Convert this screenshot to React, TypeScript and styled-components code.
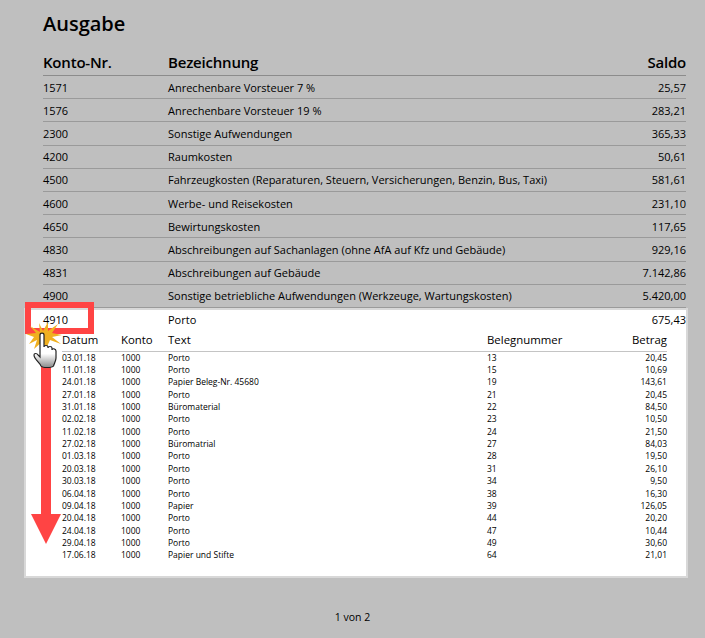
import React from 'react'
import styled, { createGlobalStyle } from 'styled-components'

const GlobalStyle = createGlobalStyle`
  html, body {
    margin: 0;
    padding: 0;
    background: #bfbfbf;
  }
  body {
    font-family: 'Open Sans', 'Noto Sans', sans-serif;
    color: #000;
  }
`

const Page = styled.div`
  position: relative;
  width: 705px;
  height: 638px;
  box-sizing: border-box;
  padding: 11px 19px 0 43px;
  overflow: hidden;
`

const Title = styled.h1`
  margin: 0;
  font-size: 20px;
  line-height: 26px;
  font-weight: 600;
`

const MainGrid = `
  display: grid;
  grid-template-columns: 125px 1fr 100px;
  align-items: center;
`

const HeadRow = styled.div`
  ${MainGrid}
  margin-top: 13px;
  height: 23px;
  padding-bottom: 2px;
  font-size: 15px;
  font-weight: 600;
  letter-spacing: -0.2px;
  border-bottom: 1px solid #8c8c8c;
`

const Row = styled.div`
  ${MainGrid}
  height: 22.2px;
  font-size: 11px;
  border-bottom: 1px solid #9a9a9a;

  &:last-of-type {
    border-bottom: none;
  }
`

const Amount = styled.div`
  text-align: right;
`

const Panel = styled.div`
  margin: 2px 0 0 -17px;
  padding: 0 0 0 17px;
  height: 266px;
  background: #fff;
  box-shadow: 0 0 0 2px #d8d8d8;
`

const PanelRow = styled.div`
  ${MainGrid}
  height: 20px;
  font-size: 11px;
`

const Detail = styled.div`
  margin: 0 19px 0 19px;
`

const DetailGrid = `
  display: grid;
  grid-template-columns: 59px 47px 319px 1fr 60px;
  align-items: center;
`

const DetailHead = styled.div`
  ${DetailGrid}
  height: 19px;
  padding-bottom: 2px;
  margin-bottom: -1px;
  font-size: 11.4px;
  border-bottom: 1px solid #c4c4c4;
`

const DetailRow = styled.div`
  ${DetailGrid}
  height: 12.36px;
  font-size: 8.5px;
`

const Footer = styled.div`
  margin-top: 34px;
  margin-left: -43px;
  margin-right: -19px;
  text-align: center;
  font-size: 10.5px;
  line-height: 14px;
`

const HighlightBox = styled.div`
  position: absolute;
  left: 25px;
  top: 302px;
  width: 69px;
  height: 32px;
  box-sizing: border-box;
  border: 6px solid #ff4444;
`

const Overlay = styled.svg`
  position: absolute;
  left: 20px;
  top: 320px;
`

const accounts = [
  ['1571', 'Anrechenbare Vorsteuer 7 %', '25,57'],
  ['1576', 'Anrechenbare Vorsteuer 19 %', '283,21'],
  ['2300', 'Sonstige Aufwendungen', '365,33'],
  ['4200', 'Raumkosten', '50,61'],
  ['4500', 'Fahrzeugkosten (Reparaturen, Steuern, Versicherungen, Benzin, Bus, Taxi)', '581,61'],
  ['4600', 'Werbe- und Reisekosten', '231,10'],
  ['4650', 'Bewirtungskosten', '117,65'],
  ['4830', 'Abschreibungen auf Sachanlagen (ohne AfA auf Kfz und Gebäude)', '929,16'],
  ['4831', 'Abschreibungen auf Gebäude', '7.142,86'],
  ['4900', 'Sonstige betriebliche Aufwendungen (Werkzeuge, Wartungskosten)', '5.420,00'],
]

const bookings = [
  ['03.01.18', 'Porto', '13', '20,45'],
  ['11.01.18', 'Porto', '15', '10,69'],
  ['24.01.18', 'Papier Beleg-Nr. 45680', '19', '143,61'],
  ['27.01.18', 'Porto', '21', '20,45'],
  ['31.01.18', 'Büromaterial', '22', '84,50'],
  ['02.02.18', 'Porto', '23', '10,50'],
  ['11.02.18', 'Porto', '24', '21,50'],
  ['27.02.18', 'Büromatrial', '27', '84,03'],
  ['01.03.18', 'Porto', '28', '19,50'],
  ['20.03.18', 'Porto', '31', '26,10'],
  ['30.03.18', 'Porto', '34', '9,50'],
  ['06.04.18', 'Porto', '38', '16,30'],
  ['09.04.18', 'Papier', '39', '126,05'],
  ['20.04.18', 'Porto', '44', '20,20'],
  ['24.04.18', 'Porto', '47', '10,44'],
  ['29.04.18', 'Porto', '49', '30,60'],
  ['17.06.18', 'Papier und Stifte', '64', '21,01'],
]

const App = () => {
  return (
    <Page>
      <GlobalStyle />
      <Title>Ausgabe</Title>
      <HeadRow>
        <div>Konto-Nr.</div>
        <div>Bezeichnung</div>
        <Amount>Saldo</Amount>
      </HeadRow>
      {accounts.map(([nr, name, saldo]) => (
        <Row key={nr}>
          <div>{nr}</div>
          <div>{name}</div>
          <Amount>{saldo}</Amount>
        </Row>
      ))}
      <Panel>
        <PanelRow>
          <div>4910</div>
          <div>Porto</div>
          <Amount>675,43</Amount>
        </PanelRow>
        <Detail>
          <DetailHead>
            <div>Datum</div>
            <div>Konto</div>
            <div>Text</div>
            <div>Belegnummer</div>
            <Amount>Betrag</Amount>
          </DetailHead>
          {bookings.map(([date, text, nr, amount]) => (
            <DetailRow key={date}>
              <div>{date}</div>
              <div>1000</div>
              <div>{text}</div>
              <div>{nr}</div>
              <Amount>{amount}</Amount>
            </DetailRow>
          ))}
        </Detail>
      </Panel>
      <Footer>1 von 2</Footer>
      <HighlightBox />
      <Overlay width="60" height="230" viewBox="0 0 60 230">
        <defs>
          <linearGradient id="handShade" x1="0" y1="0" x2="0" y2="1">
            <stop offset="0.6" stopColor="#ffffff" />
            <stop offset="1" stopColor="#8a8a8a" />
          </linearGradient>
        </defs>
        <path d="M21 40H31V194H41L26 224L11 194H21Z" fill="#ff4444" />
        <path
          d="M19 3L23 11L28 2L28 11L38 4L32 13L42 15L32 17L41 24L30 20L26 29L23 21L14 29L17 20L9 24L14 17L6 14L16 13L10 6L20 12Z"
          fill="#f0b020"
        />
        <path
          d="M20 15c0-2.500 4-2.500 4 0v12c0-2 4-2 4 0v1c0-2 4-2 4 0v2c0-2 4-1.500 4 1v7c0 3-1.500 5-2.500 8-1 1.500-3.500 1.500-6.500 1.500-3 0-5 0-6-1.500-1-3-7-7-7-11 0-2 3-2 4 0l2 2Z"
          fill="url(#handShade)"
          stroke="#222"
          strokeWidth="1.2"
        />
      </Overlay>
    </Page>
  )
}

export default App
